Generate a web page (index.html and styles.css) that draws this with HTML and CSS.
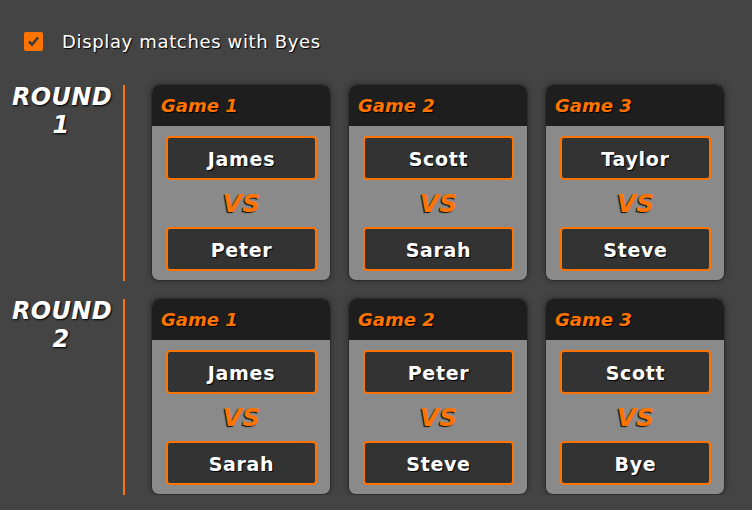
FILE: index.html
```html
<!DOCTYPE html>
<html>
<head>
<meta charset="utf-8">
<link rel="stylesheet" href="styles.css">
</head>
<body>
<div class="options">
  <span class="check"><svg width="19" height="19" viewBox="0 0 19 19"><path d="M5 9.5 L8 12.5 L14 5.5" fill="none" stroke="#3a3a3a" stroke-width="2.6"/></svg></span>
  <span class="opt-label">Display matches with Byes</span>
</div>
<div class="rounds">
  <div class="round">
    <div class="round-label">ROUND<br>1</div>
    <div class="divider"></div>
    <div class="games">
      <div class="card"><div class="card-head">Game 1</div><div class="card-body"><div class="player">James</div><div class="vs">VS</div><div class="player">Peter</div></div></div>
      <div class="card"><div class="card-head">Game 2</div><div class="card-body"><div class="player">Scott</div><div class="vs">VS</div><div class="player">Sarah</div></div></div>
      <div class="card"><div class="card-head">Game 3</div><div class="card-body"><div class="player">Taylor</div><div class="vs">VS</div><div class="player">Steve</div></div></div>
    </div>
  </div>
  <div class="round">
    <div class="round-label">ROUND<br>2</div>
    <div class="divider"></div>
    <div class="games">
      <div class="card"><div class="card-head">Game 1</div><div class="card-body"><div class="player">James</div><div class="vs">VS</div><div class="player">Sarah</div></div></div>
      <div class="card"><div class="card-head">Game 2</div><div class="card-body"><div class="player">Peter</div><div class="vs">VS</div><div class="player">Steve</div></div></div>
      <div class="card"><div class="card-head">Game 3</div><div class="card-body"><div class="player">Scott</div><div class="vs">VS</div><div class="player">Bye</div></div></div>
    </div>
  </div>
</div>
</body>
</html>
```
FILE: styles.css
```css
html, body {
  margin: 0;
  padding: 0;
  background: #444444;
  font-family: "DejaVu Sans", Verdana, sans-serif;
  color: #fff;
}
.options {
  display: flex;
  align-items: center;
  padding: 32px 0 0 24px;
  height: 19px;
}
.check {
  width: 19px;
  height: 19px;
  background: #ff7300;
  border-radius: 2px;
  display: block;
}
.check svg { display: block; }
.opt-label {
  margin-left: 19px;
  font-size: 18px;
  letter-spacing: 0.65px;
  color: #fff;
  text-shadow: 1px 1px 1px #000;
}
.rounds {
  padding: 33px 0 0 12px;
  display: flex;
  flex-direction: column;
  gap: 17px;
}
.round {
  display: flex;
  height: 197px;
}
.round-label {
  width: 98px;
  text-align: center;
  font-size: 24px;
  font-weight: bold;
  font-style: italic;
  line-height: 28px;
  margin-top: -1px;
  letter-spacing: 0.3px;
  text-shadow: 1px 1px 2px #000;
}
.divider {
  width: 2px;
  background: #ff7300;
  margin-left: 13px;
  margin-top: 1px;
}
.games {
  display: flex;
  gap: 17px;
  margin-left: 26px;
}
.card {
  width: 178px;
  height: 195px;
  border: 1px solid #2c2c2c;
  border-radius: 8px;
  overflow: hidden;
  background: #8a8a8a;
  box-shadow: 0 0 6px rgba(0,0,0,0.35);
  display: flex;
  flex-direction: column;
}
.card-head {
  height: 41px;
  background: #1e1e1e;
  color: #ff7300;
  font-size: 18px;
  font-weight: bold;
  font-style: italic;
  line-height: 42px;
  padding-left: 9px;
  text-shadow: 1px 1px 1px #000;
}
.card-body {
  padding: 10px 13px 0 14px;
  display: flex;
  flex-direction: column;
}
.player {
  height: 40px;
  border: 2px solid #ff7300;
  border-radius: 4px;
  background: #333333;
  font-size: 19px;
  font-weight: bold;
  line-height: 42px;
  text-align: center;
  letter-spacing: 0.7px;
  text-shadow: 1px 1px 1px #000;
}
.vs {
  height: 47px;
  line-height: 48px;
  text-align: center;
  color: #ff7300;
  font-size: 25px;
  font-weight: bold;
  font-style: italic;
  text-shadow: -1px 1px 1px #111;
}
```
